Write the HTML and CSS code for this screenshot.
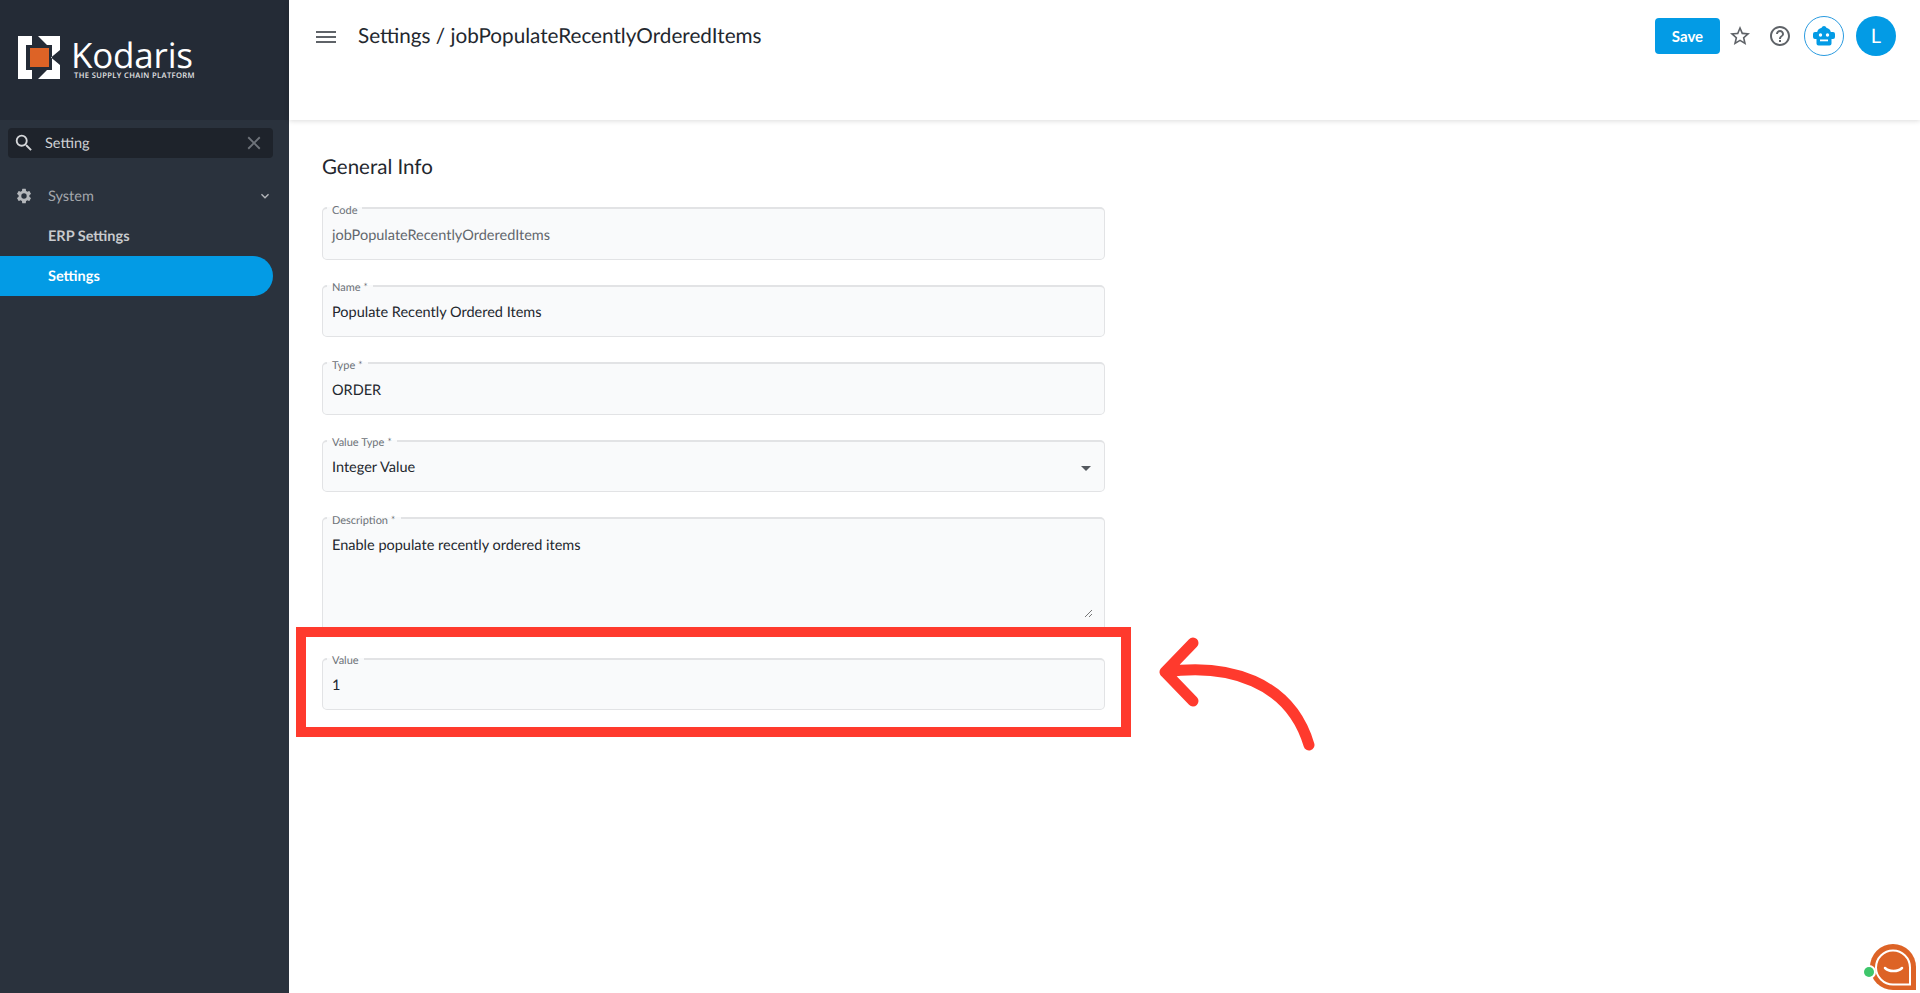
FILE: index.html
```html
<!DOCTYPE html>
<html lang="en">
<head>
<meta charset="utf-8">
<title>Settings / jobPopulateRecentlyOrderedItems</title>
<link rel="stylesheet" href="styles.css">
</head>
<body>
<div class="app">
  <aside class="sidebar">
    <div class="brand">
      <svg class="brand-mark" viewBox="0 0 42 43" width="42" height="43">
        <path fill="#fff" d="M0 0H14V9H8V34H14V43H0Z"/>
        <path fill="#fff" d="M20 0H42V14L33 21.500L42 29V43H20L29 34H34V9H29Z"/>
        <rect x="12" y="12" width="19" height="19" fill="#dd6326"/>
      </svg>
      <div class="brand-text">
        <div class="brand-name">Kodaris</div>
        <div class="brand-tag">THE SUPPLY CHAIN PLATFORM</div>
      </div>
    </div>
    <div class="search">
      <svg class="search-icon" viewBox="0 0 24 24" width="22" height="22"><path fill="#d5d7da" d="M15.5 14h-.79l-.28-.27A6.47 6.47 0 0 0 16 9.5 6.5 6.5 0 1 0 9.5 16c1.61 0 3.09-.59 4.23-1.57l.27.28v.79l5 4.99L20.49 19l-4.99-5zm-6 0C7.01 14 5 11.99 5 9.5S7.01 5 9.5 5 14 7.01 14 9.5 11.99 14 9.5 14z"/></svg>
      <span class="search-text">Setting</span>
      <svg class="search-clear" viewBox="0 0 24 24" width="22" height="22"><path fill="#6f747b" d="M19 6.41 17.59 5 12 10.59 6.41 5 5 6.41 10.59 12 5 17.59 6.41 19 12 13.41 17.59 19 19 17.59 13.41 12z"/></svg>
    </div>
    <nav class="nav">
      <div class="nav-group">
        <svg class="nav-icon" viewBox="0 0 24 24" width="18" height="18"><path fill="#b4b7bb" d="M19.14 12.94c.04-.3.06-.61.06-.94s-.02-.64-.07-.94l2.03-1.58a.5.5 0 0 0 .12-.61l-1.92-3.32a.49.49 0 0 0-.59-.22l-2.39.96a7 7 0 0 0-1.62-.94l-.36-2.54a.48.48 0 0 0-.48-.41h-3.84a.48.48 0 0 0-.47.41l-.36 2.54c-.59.24-1.13.57-1.62.94l-2.39-.96a.49.49 0 0 0-.59.22L2.73 8.87a.48.48 0 0 0 .12.61l2.03 1.58c-.05.3-.08.63-.08.94s.02.64.07.94l-2.03 1.58a.5.5 0 0 0-.12.61l1.92 3.32c.12.22.37.29.59.22l2.39-.96c.5.38 1.03.7 1.62.94l.36 2.54c.05.24.24.41.48.41h3.84c.24 0 .44-.17.47-.41l.36-2.54c.59-.24 1.13-.56 1.62-.94l2.39.96c.22.08.47 0 .59-.22l1.92-3.32a.48.48 0 0 0-.12-.61zM12 15.6A3.6 3.6 0 1 1 12 8.4a3.6 3.6 0 0 1 0 7.2z"/></svg>
        <span class="nav-group-label">System</span>
        <svg class="nav-caret" viewBox="0 0 24 24" width="16" height="16"><path fill="#b4b7bb" d="M16.59 8.59 12 13.17 7.41 8.59 6 10l6 6 6-6z"/></svg>
      </div>
      <div class="nav-item">ERP Settings</div>
      <div class="nav-item is-active">Settings</div>
    </nav>
  </aside>
  <div class="content">
    <header class="topbar">
      <svg class="menu-icon" viewBox="0 0 20 14" width="20" height="14"><path fill="#5f6368" d="M0 1h20v2H0zM0 6h20v2H0zM0 11h20v2H0z"/></svg>
      <h1 class="page-title">Settings / jobPopulateRecentlyOrderedItems</h1>
      <div class="actions">
        <button class="save">Save</button>
        <svg class="icon-star" viewBox="0 0 24 24" width="24" height="24"><path fill="#5f6368" d="M22 9.24l-7.19-.62L12 2 9.19 8.63 2 9.24l5.46 4.73L5.82 21 12 17.27 18.18 21l-1.63-7.03L22 9.24zM12 15.4l-3.76 2.27 1-4.28-3.32-2.88 4.38-.38L12 6.1l1.71 4.04 4.38.38-3.32 2.88 1 4.28L12 15.4z"/></svg>
        <svg class="icon-help" viewBox="0 0 24 24" width="24" height="24"><path fill="#5f6368" d="M11 18h2v-2h-2v2zm1-16C6.48 2 2 6.48 2 12s4.48 10 10 10 10-4.48 10-10S17.52 2 12 2zm0 18c-4.41 0-8-3.59-8-8s3.59-8 8-8 8 3.59 8 8-3.59 8-8 8zm0-14c-2.21 0-4 1.79-4 4h2c0-1.1.9-2 2-2s2 .9 2 2c0 2-3 1.75-3 5h2c0-2.25 3-2.5 3-5 0-2.21-1.79-4-4-4z"/></svg>
        <div class="bot">
          <svg viewBox="0 0 24 20" width="24" height="20"><path fill="#039be5" d="M12 0a2.500 2.500 0 0 1 2.400 1.800C16.800 2.400 18.400 4 18.800 6H21a2 2 0 0 1 2 2v3a2 2 0 0 1-2 2h-1.500v4.500A2 2 0 0 1 17.500 19.500H6.500a2 2 0 0 1-2-2V13H3a2 2 0 0 1-2-2V8a2 2 0 0 1 2-2h2.200C5.600 4 7.200 2.400 9.600 1.800A2.500 2.500 0 0 1 12 0z"/><circle cx="8.500" cy="9" r="1.700" fill="#fff"/><circle cx="15.500" cy="9" r="1.700" fill="#fff"/><rect x="8" y="13.500" width="8" height="1.800" fill="#fff"/></svg>
        </div>
        <div class="avatar">L</div>
      </div>
    </header>
    <main class="main">
      <h2 class="section-title">General Info</h2>
      <form class="form">
        <fieldset class="field"><legend>Code</legend><div class="value is-muted">jobPopulateRecentlyOrderedItems</div></fieldset>
        <fieldset class="field"><legend>Name *</legend><div class="value">Populate Recently Ordered Items</div></fieldset>
        <fieldset class="field"><legend>Type *</legend><div class="value">ORDER</div></fieldset>
        <fieldset class="field"><legend>Value Type *</legend><div class="value value-row"><span>Integer Value</span><span class="select-caret"></span></div></fieldset>
        <fieldset class="field field-area"><legend>Description *</legend><div class="value value-area"><span>Enable populate recently ordered items</span>
          <svg class="resize" viewBox="0 0 9 9" width="9" height="9"><path stroke="#777" stroke-width="1" d="M1 8 8 1M5 8 8 5"/></svg></div>
        </fieldset>
        <fieldset class="field"><legend>Value</legend><div class="value">1</div></fieldset>
      </form>
    </main>
  </div>
</div>
<div class="highlight"></div>
<svg class="arrow" viewBox="0 0 170 125" width="170" height="125"><path fill="none" stroke="#ff3a2d" stroke-width="11" stroke-linecap="round" stroke-linejoin="round" d="M37 8 9 37 37 66M9 37C72 28 134 46 153 110"/></svg>
<div class="chat">
  <svg viewBox="0 0 56 50" width="56" height="50"><path fill="#dd6326" d="M31 3a23 23 0 0 1 23 23V49H31A23 23 0 0 1 31 3Z"/><path fill="none" stroke="#fff" stroke-width="2" d="M31 9.500a17 17 0 0 0 0 34H48V26.500A17 17 0 0 0 31 9.500Z"/><path fill="none" stroke="#fff" stroke-width="2.500" stroke-linecap="round" d="M23 27C27 31 36 31 40 27"/><circle cx="7" cy="31" r="7" fill="#fff"/><circle cx="7" cy="31" r="5" fill="#3ec66b"/></svg>
</div>
</body>
</html>
```
FILE: styles.css
```css
* { box-sizing: border-box; }
html, body { margin: 0; height: 100%; }
body { font-family: "Lato", "Noto Sans", sans-serif; color: #23272e; background: #fff; overflow: hidden; text-rendering: geometricPrecision; }
.app { display: flex; height: 993px; }
.sidebar { width: 289px; flex: none; background: #2a323d; color: #fff; }
.brand { height: 120px; background: #242b36; display: flex; align-items: flex-start; padding: 36px 0 0 18px; gap: 12px; }
.brand-mark { flex: none; }
.brand-text { display: flex; flex-direction: column; padding-top: 5px; margin-left: 2px; }
.brand-name { font-family: "Open Sans", sans-serif; font-size: 35px; line-height: 29px; height: 29px; letter-spacing: -0.2px; color: #fff; margin-left: -3px; }
.brand-tag { font-family: "Open Sans", sans-serif; font-weight: 600; font-size: 7.6px; line-height: 9px; letter-spacing: .37px; color: #e4e5e7; margin-top: 2px; white-space: nowrap; }
.search { margin: 8px 16px 0 8px; height: 30px; background: #1e232b; border-radius: 4px; display: flex; align-items: center; padding: 0 8px 0 5px; }
.search-icon { flex: none; }
.search-text { flex: 1; margin-left: 10px; font-size: 14.500px; color: #cfd1d4; }
.search-clear { flex: none; }
.nav { margin-top: 18px; }
.nav-group { height: 40px; display: flex; align-items: center; padding: 0 16px 0 15px; }
.nav-group-label { flex: 1; margin-left: 15px; font-size: 14.500px; color: #a3a6ab; }
.nav-item { height: 40px; display: flex; align-items: center; padding: 1px 0 0 48px; font-size: 14.500px; font-weight: 700; color: #c8cacd; width: 273px; }
.nav-item.is-active { background: #039be5; color: #fff; font-weight: 700; border-radius: 0 20px 20px 0; }
.content { flex: 1; min-width: 0; }
.topbar { height: 120px; background: #fff; box-shadow: 0 1px 5px rgba(0,0,0,.14); display: flex; align-items: flex-start; padding: 0 24px 0 27px; position: relative; }
.menu-icon { margin-top: 30px; flex: none; }
.page-title { margin: 21px 0 0 22px; font-size: 20.700px; line-height: 30px; font-weight: 400; white-space: nowrap; flex: 1; }
.actions { display: flex; align-items: center; margin-top: 16px; }
.save { width: 65px; height: 36px; border: 0; border-radius: 4px; background: #039be5; color: #fff; font: 700 15px "Lato", sans-serif; padding: 0; }
.icon-star { margin-left: 8px; }
.icon-help { margin-left: 16px; }
.bot { width: 40px; height: 40px; margin-left: 12px; border: 1px solid #2a9be0; border-radius: 50%; display: flex; align-items: center; justify-content: center; }
.avatar { width: 40px; height: 40px; margin-left: 12px; border-radius: 50%; background: #039be5; color: #fff; display: flex; align-items: center; justify-content: center; font-size: 20px; }
.main { padding: 35px 0 0 33px; }
.section-title { margin: 0; font-size: 20.500px; line-height: 24px; font-weight: 400; }
.form { width: 783px; margin-top: 20.500px; display: flex; flex-direction: column; gap: 17.600px; }
.field { margin: 0; height: 60px; min-width: 0; padding: 0 9px; background: #f9fafb; border: 1px solid #e2e3e5; border-top-width: 2px; border-radius: 5px; }
.field legend { padding: 5px 5px 0; margin-left: -5px; font-size: 11px; line-height: 12px; color: #6d7278; }
.value { font-size: 14.500px; line-height: 20px; margin-top: 9px; white-space: nowrap; }
.is-muted { color: #62676d; }
.field-area { height: 123px; }
.value-row { display: flex; align-items: center; justify-content: space-between; }
.value-area { display: flex; flex-direction: column; height: 82px; }
.select-caret { margin-right: 4px; border-left: 5px solid transparent; border-right: 5px solid transparent; border-top: 5px solid #55595f; }
.resize { margin-top: auto; margin-right: 2px; align-self: flex-end; }
.highlight { position: absolute; left: 296px; top: 627px; width: 835px; height: 110px; border: 10px solid #ff3a2d; }
.arrow { position: absolute; left: 1156px; top: 635px; }
.chat { position: absolute; right: 2px; bottom: 2px; width: 56px; height: 50px; }
```
